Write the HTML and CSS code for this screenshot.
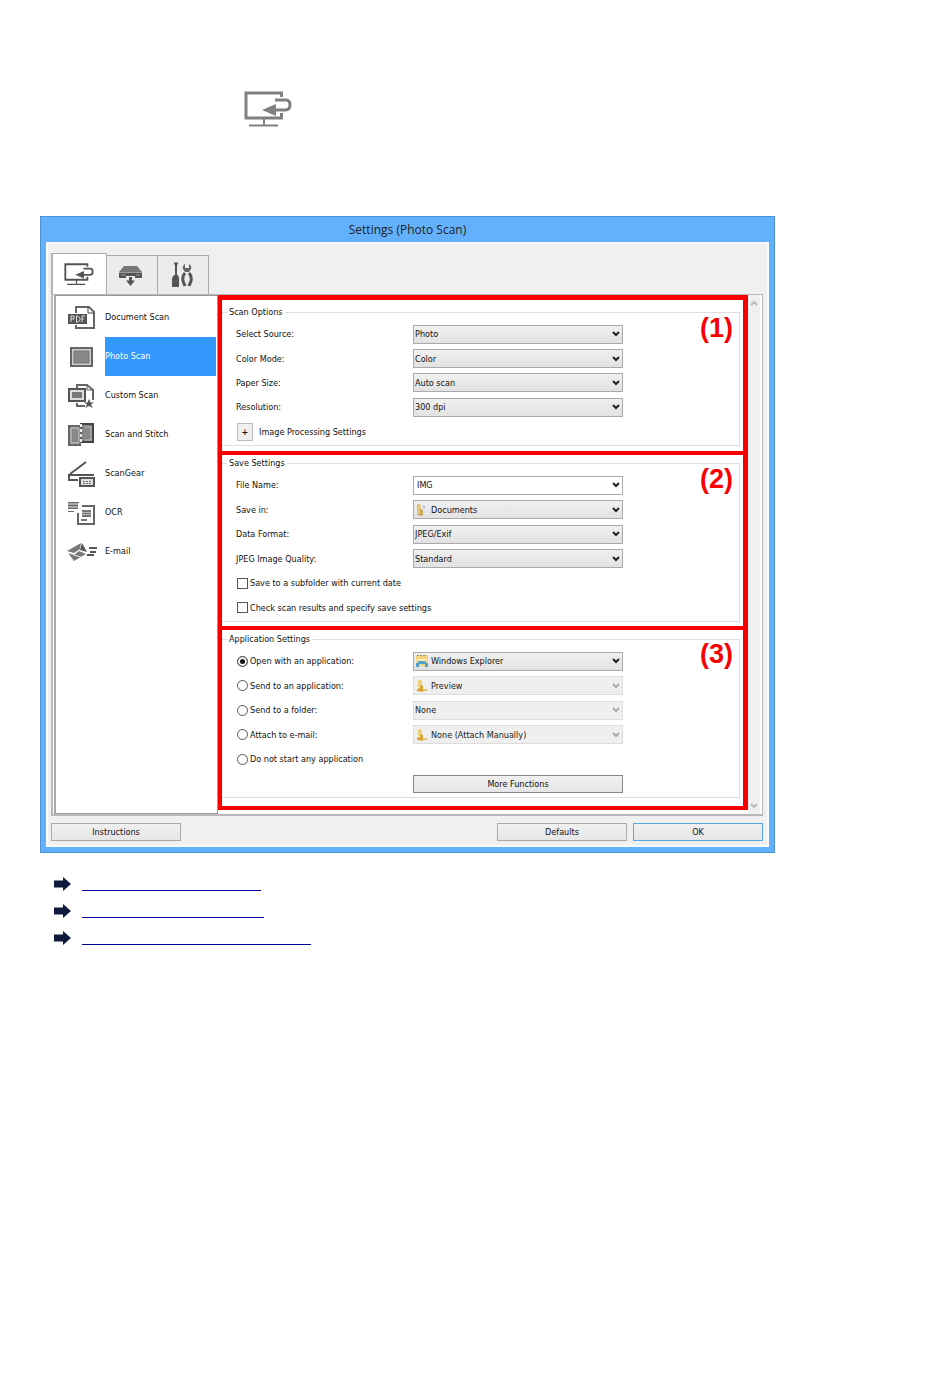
FILE: index.html
```
<!DOCTYPE html>
<html lang="en">
<head>
    <title>Settings (Photo Scan)</title>
    <meta charset="UTF-8">
    <link rel="stylesheet" href="styles.css">
</head>
<body>
    <!-- Shared icons -->
    <svg class="defs" aria-hidden="true">
        <symbol id="computer" viewBox="0 0 48 37">
            <path d="M37.500 6V2H2V27H37.500V22" fill="none" stroke="currentColor" stroke-width="3"/>
            <path d="M20 27V34M5 34.500H34" fill="none" stroke="currentColor" stroke-width="2"/>
            <path d="M31 9H42Q46 9 46 14Q46 19 41 19H30" fill="none" stroke="currentColor" stroke-width="3"/>
            <path d="M18 19L32 13V25Z" fill="currentColor"/>
        </symbol>
        <symbol id="chevron" viewBox="0 0 8 6">
            <path d="M1 1L4 4L7 1" fill="none" stroke="currentColor" stroke-width="2"/>
        </symbol>
        <symbol id="folder" viewBox="0 0 14 14">
            <path d="M3 1H6L7 3V7H5L3 9Z" fill="#f0cf7c"/>
            <path d="M5 6L8 7V13L2 12V10L5 9Z" fill="#d9a336"/>
            <path d="M8 10H12V12H8Z" fill="#e3c679"/>
        </symbol>
        <symbol id="arrow" viewBox="0 0 18 14">
            <path d="M0 3.500H9V0L17 7L9 14V10.500H0Z" fill="#0f1a3d"/>
        </symbol>
    </svg>

    <div class="page-icon">
        <svg width="48" height="37" role="img" aria-label="Computer"><use href="#computer"/></svg>
    </div>

    <div class="window">
        <div class="title">Settings (Photo Scan)</div>
        <form class="client">
            <div class="tabs">
                <button type="button" class="tab active" aria-label="Scanning from a Computer">
                    <svg width="30" height="23"><use href="#computer"/></svg>
                </button>
                <button type="button" class="tab" aria-label="Scanning from the Operation Panel">
                    <svg width="24" height="24" viewBox="0 0 24 24">
                        <path d="M5 3H18L23 9H0Z" fill="#777"/>
                        <path d="M0 9.500H23V15H16V13H7V15H0Z" fill="#555"/>
                        <path d="M2 12H7M17 12H21" stroke="#999"/>
                        <path d="M11.500 14V20" stroke="#555" stroke-width="3"/>
                        <path d="M7 17.500H16L11.500 23Z" fill="#555"/>
                    </svg>
                </button>
                <button type="button" class="tab" aria-label="General Settings">
                    <svg width="22" height="26" viewBox="0 0 22 26">
                        <path d="M3 1.500H7M5 1V13" stroke="#555" stroke-width="2"/>
                        <path d="M3 13H7L8 16V25H1V16Z" fill="#555"/>
                        <path d="M14 2Q11 4 12 7L14 10H18L20 7Q21 4 18 2V6H14Z" fill="#666"/>
                        <path d="M14 11Q11 14 12 19L14 24M18 11Q21 14 20 19L18 24" fill="none" stroke="#555" stroke-width="3"/>
                    </svg>
                </button>
            </div>

            <div class="panel">
                <nav class="sidebar">
                    <a href="#">
                        <svg width="30" height="26" viewBox="0 0 30 26">
                            <path d="M9 8V2H22L27 7V23H9V20" fill="none" stroke="#666" stroke-width="2"/>
                            <path d="M21 2V8H27" fill="none" stroke="#444"/>
                            <path d="M1 9H20V19H1Z" fill="#555"/>
                            <path d="M4 17V11H7V14H4M9.500 11V17H11L13 15V13L11 11ZM15 17V11H18M15 14H17" fill="none" stroke="#ddd"/>
                        </svg>
                        <span>Document Scan</span>
                    </a>
                    <a href="#" class="selected">
                        <svg width="30" height="26" viewBox="0 0 30 26">
                            <path d="M4 4H25V22H4Z" fill="#ccc" stroke="#666" stroke-width="2"/>
                            <path d="M7 7H22V19H7Z" fill="#888" stroke="#777"/>
                        </svg>
                        <span>Photo Scan</span>
                    </a>
                    <a href="#">
                        <svg width="30" height="26" viewBox="0 0 30 26">
                            <path d="M10 5V2H20L26 7V17M10 20V23H18" fill="none" stroke="#666" stroke-width="2"/>
                            <path d="M20 2V7H26" fill="none" stroke="#555"/>
                            <path d="M2 6H18V18H2Z" fill="#ddd" stroke="#555" stroke-width="2"/>
                            <path d="M5 9H15V15H5Z" fill="#777"/>
                            <path d="M22 16L23.500 19.500H27L24 21.500L26 25L22 23L18 25L20 21.500L17 19.500H20.500Z" fill="#555"/>
                        </svg>
                        <span>Custom Scan</span>
                    </a>
                    <a href="#">
                        <svg width="30" height="26" viewBox="0 0 30 26">
                            <path d="M14 2H26V20H14Z" fill="#888" stroke="#444" stroke-width="2"/>
                            <path d="M2 4H13V23H2Z" fill="#888" stroke="#666" stroke-width="2"/>
                            <path d="M4 6H12V21H4Z" fill="none" stroke="#ccc"/>
                            <path d="M14 2V22" stroke="#eee" stroke-width="2" stroke-dasharray="3 2"/>
                            <path d="M18 5H24V18H18" fill="none" stroke="#bbb"/>
                        </svg>
                        <span>Scan and Stitch</span>
                    </a>
                    <a href="#">
                        <svg width="30" height="26" viewBox="0 0 30 26">
                            <path d="M3 13L19 1" fill="none" stroke="#555" stroke-width="2"/>
                            <path d="M1 14H27M2 14V19H11" fill="none" stroke="#555" stroke-width="2"/>
                            <path d="M13 17H27V25H13Z" fill="#ddd" stroke="#555" stroke-width="2"/>
                            <path d="M16 20.500H25M16 22.500H25" stroke="#777" stroke-dasharray="2 1"/>
                        </svg>
                        <span>ScanGear</span>
                    </a>
                    <a href="#">
                        <svg width="30" height="26" viewBox="0 0 30 26">
                            <path d="M1 2H11V9H1Z" fill="#aaa"/>
                            <path d="M1 2.500H12M1 5.500H11M1 8.500H11M1 11.500H7" stroke="#666"/>
                            <path d="M15 6H27V24H11V13" fill="none" stroke="#666" stroke-width="2"/>
                            <path d="M15 11H24M15 13.500H24M15 16H24M14 20H20" stroke="#777" stroke-width="2"/>
                        </svg>
                        <span>OCR</span>
                    </a>
                    <a href="#">
                        <svg width="30" height="26" viewBox="0 0 30 26">
                            <path d="M0 12L14 4L13 10L7 14Z" fill="#777"/>
                            <path d="M15 4L20 13L13 11Z" fill="#555"/>
                            <path d="M1 14L7 16L12 12L19 15L7 22Z" fill="#777"/>
                            <path d="M1 14L6 22M7 16L14 18" stroke="#eee"/>
                            <path d="M22 9H30M23 13H29M20 16H27" stroke="#555" stroke-width="2"/>
                        </svg>
                        <span>E-mail</span>
                    </a>
                </nav>

                <div class="settings">
                    <section class="scan-options">
                        <b class="number">(1)</b>
                        <fieldset>
                            <legend>Scan Options</legend>
                            <div class="rows">
                                <div class="row">
                                    <label for="source">Select Source:</label>
                                    <div class="combo">
                                        <select id="source"><option>Photo</option></select>
                                        <svg class="chevron"><use href="#chevron"/></svg>
                                    </div>
                                </div>
                                <div class="row">
                                    <label for="color">Color Mode:</label>
                                    <div class="combo">
                                        <select id="color"><option>Color</option></select>
                                        <svg class="chevron"><use href="#chevron"/></svg>
                                    </div>
                                </div>
                                <div class="row">
                                    <label for="paper">Paper Size:</label>
                                    <div class="combo">
                                        <select id="paper"><option>Auto scan</option></select>
                                        <svg class="chevron"><use href="#chevron"/></svg>
                                    </div>
                                </div>
                                <div class="row">
                                    <label for="resolution">Resolution:</label>
                                    <div class="combo">
                                        <select id="resolution"><option>300 dpi</option></select>
                                        <svg class="chevron"><use href="#chevron"/></svg>
                                    </div>
                                </div>
                                <div class="line">
                                    <button type="button" class="expand" id="expand">+</button>
                                    <label for="expand">Image Processing Settings</label>
                                </div>
                            </div>
                        </fieldset>
                    </section>

                    <section class="save-settings">
                        <b class="number">(2)</b>
                        <fieldset>
                            <legend>Save Settings</legend>
                            <div class="rows">
                                <div class="row">
                                    <label for="filename">File Name:</label>
                                    <div class="combo">
                                        <input type="text" id="filename" value="IMG">
                                        <svg class="chevron"><use href="#chevron"/></svg>
                                    </div>
                                </div>
                                <div class="row">
                                    <label for="savein">Save in:</label>
                                    <div class="combo with-icon">
                                        <select id="savein"><option>Documents</option></select>
                                        <svg class="item-icon" viewBox="0 0 14 14">
                                            <path d="M2 1H5L6 3V12L2 11Z" fill="#e3c679"/>
                                            <path d="M5 6L8 7V13L2 12L5 10Z" fill="#c9a75a"/>
                                            <path d="M7 2H11V12H8V7L7 6Z" fill="#dfe6ee"/>
                                            <path d="M8 4H10" stroke="#7c93b5"/>
                                        </svg>
                                        <svg class="chevron"><use href="#chevron"/></svg>
                                    </div>
                                </div>
                                <div class="row">
                                    <label for="format">Data Format:</label>
                                    <div class="combo">
                                        <select id="format"><option>JPEG/Exif</option></select>
                                        <svg class="chevron"><use href="#chevron"/></svg>
                                    </div>
                                </div>
                                <div class="row">
                                    <label for="quality">JPEG Image Quality:</label>
                                    <div class="combo">
                                        <select id="quality"><option>Standard</option></select>
                                        <svg class="chevron"><use href="#chevron"/></svg>
                                    </div>
                                </div>
                                <label class="line"><input type="checkbox">Save to a subfolder with current date</label>
                                <label class="line"><input type="checkbox">Check scan results and specify save settings</label>
                            </div>
                        </fieldset>
                    </section>

                    <section class="app-settings">
                        <b class="number">(3)</b>
                        <fieldset>
                            <legend>Application Settings</legend>
                            <div class="rows">
                                <div class="row">
                                    <label class="line"><input type="radio" name="after" checked>Open with an application:</label>
                                    <div class="combo with-icon">
                                        <select aria-label="Application to open"><option>Windows Explorer</option></select>
                                        <svg class="item-icon" viewBox="0 0 14 14">
                                            <path d="M1 2H13V12H1Z" fill="#f2d27a"/>
                                            <path d="M2 1.500H12" stroke="#a58a4a" stroke-dasharray="2 1"/>
                                            <path d="M2 5H12V8H2Z" fill="#fbeab0"/>
                                            <path d="M1 9H3V7H11V9H13V13H10V10H4V13H1Z" fill="#4fa3cf"/>
                                        </svg>
                                        <svg class="chevron"><use href="#chevron"/></svg>
                                    </div>
                                </div>
                                <div class="row">
                                    <label class="line"><input type="radio" name="after">Send to an application:</label>
                                    <div class="combo with-icon">
                                        <select disabled aria-label="Application to send to"><option>Preview</option></select>
                                        <svg class="item-icon"><use href="#folder"/></svg>
                                        <svg class="chevron"><use href="#chevron"/></svg>
                                    </div>
                                </div>
                                <div class="row">
                                    <label class="line"><input type="radio" name="after">Send to a folder:</label>
                                    <div class="combo">
                                        <select disabled aria-label="Folder"><option>None</option></select>
                                        <svg class="chevron"><use href="#chevron"/></svg>
                                    </div>
                                </div>
                                <div class="row">
                                    <label class="line"><input type="radio" name="after">Attach to e-mail:</label>
                                    <div class="combo with-icon">
                                        <select disabled aria-label="E-mail client"><option>None (Attach Manually)</option></select>
                                        <svg class="item-icon"><use href="#folder"/></svg>
                                        <svg class="chevron"><use href="#chevron"/></svg>
                                    </div>
                                </div>
                                <label class="line"><input type="radio" name="after">Do not start any application</label>
                                <div class="row">
                                    <span></span>
                                    <button type="button" class="btn more">More Functions</button>
                                </div>
                            </div>
                        </fieldset>
                    </section>
                </div>

                <div class="scrollbar">
                    <svg class="chevron up"><use href="#chevron"/></svg>
                    <svg class="chevron"><use href="#chevron"/></svg>
                </div>
            </div>

            <div class="buttons">
                <button type="button" class="btn instructions">Instructions</button>
                <button type="button" class="btn">Defaults</button>
                <button type="button" class="btn ok">OK</button>
            </div>
        </form>
    </div>

    <ul class="links">
        <li><svg width="18" height="14"><use href="#arrow"/></svg><a href="#" class="short" aria-label="Scan Options"></a></li>
        <li><svg width="18" height="14"><use href="#arrow"/></svg><a href="#" class="medium" aria-label="Save Settings"></a></li>
        <li><svg width="18" height="14"><use href="#arrow"/></svg><a href="#" class="long" aria-label="Application Settings"></a></li>
    </ul>
</body>
</html>
```

FILE: styles.css
```
* {
    box-sizing: border-box;
}
body {
    margin: 0 175px 0 40px;
    background-color: #fff;
    color: #111;
    font-family: "DejaVu Sans Condensed", "DejaVu Sans", sans-serif;
    font-size: 9px;
    line-height: 12px;
}
svg {
    display: block;
    flex: none;
}
button, input, select {
    margin: 0;
    font: inherit;
    color: inherit;
}
.defs {
    position: absolute;
    width: 0;
    height: 0;
}
.page-icon {
    padding: 91px 0 88px 204px;
    color: #808080;
}

/* Window frame */
.window {
    padding: 0 5px 5px;
    background-color: #63b1fc;
    border: 1px solid #4b93d3;
}
.title {
    height: 25px;
    font: 12px/25px "Open Sans", sans-serif;
    color: #222;
    text-align: center;
}
.client {
    padding: 9px 4px 4px 3px;
    background-color: #f0f0f0;
    border: 2px solid #fafafa;
}

/* Tabs */
.tabs {
    display: flex;
    align-items: flex-end;
}
.tab {
    display: flex;
    align-items: center;
    justify-content: center;
    width: 51px;
    height: 39px;
    padding: 0 2px 0 0;
    background-color: #ececec;
    border: 1px solid #aaa;
    border-width: 1px 1px 0 0;
}
.tab.active {
    width: 56px;
    height: 41px;
    background-color: #fff;
    border-left: 2px solid #b4b4b8;
    color: #555;
}

/* Panel */
.panel {
    display: flex;
    padding: 0 2px 0 1px;
    background-color: #fdfdfd;
    border: 2px solid #b8b8bc;
    border-width: 1px 1px 2px 2px;
}
.sidebar {
    width: 164px;
    padding: 2px 1px 0 0;
    background-color: #fff;
    border: 1px solid #999;
    border-left: 2px solid #a8a8ac;
}
.sidebar a {
    display: flex;
    align-items: center;
    height: 39px;
    padding-left: 11px;
    color: #111;
    text-decoration: none;
}
.sidebar span {
    flex: 1;
    margin-left: 8px;
    line-height: 39px;
}
.sidebar .selected span {
    background-color: #3399ff;
    color: #fff;
}
.settings {
    flex: 1;
    margin-bottom: 4px;
    background-color: #fff;
    border: 5px solid #f80000;
    border-width: 5px 5px 4px 4px;
}
section {
    position: relative;
}
.scan-options {
    padding: 6px 3px 5px 0;
}
.save-settings {
    padding: 2px 3px 4px 0;
    border: 4px solid #f80000;
    border-width: 4px 0;
}
.app-settings {
    padding: 3px 3px 8px 0;
}
.number {
    position: absolute;
    top: 14px;
    right: 10px;
    font: bold 27px/28px "Liberation Sans", Arial, sans-serif;
    color: #f80000;
}
.save-settings .number, .app-settings .number {
    top: 10px;
}
fieldset {
    min-width: 0;
    margin: 0;
    padding: 4px 0 1px;
    border: 1px solid #ddd;
    border-left: 0;
}
legend {
    margin-left: 5px;
    padding: 0 2px;
    line-height: 12px;
}
.rows {
    display: grid;
    grid-template-rows: repeat(5, 1fr);
    height: 122px;
    padding-left: 14px;
}
.save-settings .rows, .app-settings .rows {
    grid-template-rows: repeat(6, 1fr);
    height: 147px;
}
.row {
    display: grid;
    grid-template-columns: 177px minmax(0, 210px);
    align-items: center;
}
.line {
    display: flex;
    align-items: center;
    gap: 2px;
}
.expand {
    width: 16px;
    height: 18px;
    margin: 0 4px 0 1px;
    padding: 0;
    background-color: #f0f0f0;
    border: 1px solid #bbb;
    font-weight: bold;
}

/* Drop-downs */
.combo {
    display: grid;
    align-items: center;
}
.combo > * {
    grid-area: 1 / 1;
}
.combo select, .combo input {
    width: 100%;
    height: 19px;
    padding: 0 16px 0 1px;
    appearance: none;
    background: linear-gradient(#f0f0f0, #e2e2e2);
    border: 1px solid #aaa;
    border-radius: 0;
    opacity: 1;
}
.combo input {
    padding-left: 3px;
    background: #fff;
}
.combo.with-icon select {
    padding-left: 17px;
}
.combo select:disabled {
    background: #efefef;
    border-color: #ddd;
    color: #222;
}
.combo select:disabled ~ .chevron {
    color: #aaa;
}
.item-icon {
    width: 14px;
    height: 14px;
    margin-left: 2px;
    pointer-events: none;
}
.chevron {
    width: 8px;
    height: 6px;
    color: #222;
    pointer-events: none;
}
.combo .chevron {
    justify-self: end;
    margin-right: 3px;
}

/* Check boxes and radio buttons */
.line input {
    width: 11px;
    height: 11px;
    margin-left: 1px;
    appearance: none;
    background-color: #fff;
    border: 1px solid #555;
}
.line input[type="radio"] {
    border-radius: 50%;
}
.line input[type="radio"]:checked {
    background-color: #111;
    box-shadow: inset 0 0 0 2px #fff;
}

.scrollbar {
    display: flex;
    flex-direction: column;
    align-items: center;
    justify-content: space-between;
    width: 12px;
    padding: 5px 0;
    background-color: #f0f0f0;
}
.scrollbar .chevron {
    color: #bbb;
}
.scrollbar .up {
    transform: rotate(180deg);
}

/* Buttons */
.btn {
    width: 130px;
    height: 18px;
    padding: 0;
    background: linear-gradient(#f0f0f0, #e6e6e6);
    border: 1px solid #aaa;
}
.btn.more {
    width: 100%;
    border-color: #888;
}
.btn.ok {
    border-color: #5aa5dc;
}
.buttons {
    display: flex;
    gap: 6px;
    padding: 7px 0 0;
}
.instructions {
    margin-right: auto;
}

/* Links under the window */
.links {
    margin: 24px 0 0;
    padding: 0 0 0 14px;
    list-style: none;
}
.links li {
    display: flex;
    align-items: flex-start;
    gap: 10px;
    height: 27px;
}
.links a {
    height: 14px;
    border-bottom: 1px solid #000099;
}
.short {
    width: 179px;
}
.medium {
    width: 182px;
}
.long {
    width: 229px;
}
```
